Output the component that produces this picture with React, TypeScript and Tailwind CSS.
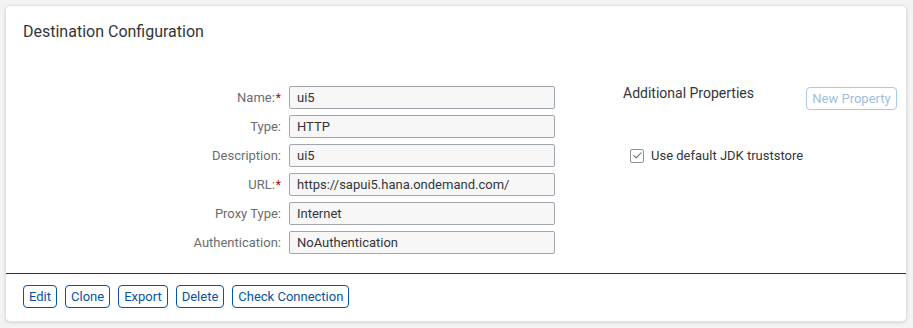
import { Check } from 'lucide-react';

const fields = [
  { label: "Name:", value: "ui5", required: true },
  { label: "Type:", value: "HTTP" },
  { label: "Description:", value: "ui5" },
  { label: "URL:", value: "https://sapui5.hana.ondemand.com/", required: true },
  { label: "Proxy Type:", value: "Internet" },
  { label: "Authentication:", value: "NoAuthentication" },
];

const actions = ["Edit", "Clone", "Export", "Delete", "Check Connection"];

export default function App() {
  return (
    <div className="w-[913px] h-[328px] bg-[#f3f3f3] pt-[5px] pl-[5px] font-['Roboto',sans-serif] overflow-hidden">
      <div className="w-[902px] h-[317px] bg-white border border-[#e2e2e2] rounded-[5px] shadow-[0_1px_3px_rgba(0,0,0,0.12)] flex flex-col">
        {/* header */}
        <div className="pt-[15px] pl-[17px] h-[80px]">
          <h1 className="text-[16px] leading-[22px] text-[#32363a]">Destination Configuration</h1>
        </div>

        {/* form */}
        <div className="flex h-[187px]">
          <div className="grid grid-cols-[258px_266px] gap-x-[8px] gap-y-[6px] content-start pl-[17px]">
            {fields.map((f) => (
              <div key={f.label} className="contents">
                <div className="flex items-center justify-end h-[23px] text-[13px] text-[#6a6d70]">
                  {f.label}
                  {f.required && <span className="text-[#bb0000] ml-[1px] text-[12px]">*</span>}
                </div>
                <div className="h-[23px] bg-[#f7f7f7] border border-[#a0a6ad] rounded-[2px] flex items-center px-[7px] text-[13px] text-[#32363a]">
                  {f.value}
                </div>
              </div>
            ))}
          </div>

          <div className="ml-[68px] w-[274px] flex flex-col">
            <div className="flex justify-between items-start">
              <span className="text-[14px] leading-[17px] -mt-[1px] text-[#32363a]">Additional Properties</span>
              <button className="h-[23px] w-[91px] mt-[1px] border border-[#a9c9ea] rounded-[4px] text-[13px] text-[#9dbfe2] bg-white">
                New Property
              </button>
            </div>
            <label className="flex items-center gap-[7px] ml-[7px] mt-[36px] text-[13px] text-[#32363a]">
              <span className="w-[14px] h-[14px] border border-[#89919a] rounded-[2px] flex items-center justify-center bg-white">
                <Check size={11} strokeWidth={2.2} className="text-[#5d6166]" />
              </span>
              Use default JDK truststore
            </label>
          </div>
        </div>

        {/* footer */}
        <div className="border-t-[1.5px] border-[#32363a] flex gap-[8px] pt-[11px] pl-[17px]">
          {actions.map((a) => (
            <button
              key={a}
              className="h-[23px] px-[5px] border border-[#0854a0] rounded-[4px] text-[13px] text-[#0854a0] bg-white"
            >
              {a}
            </button>
          ))}
        </div>
      </div>
    </div>
  );
}
